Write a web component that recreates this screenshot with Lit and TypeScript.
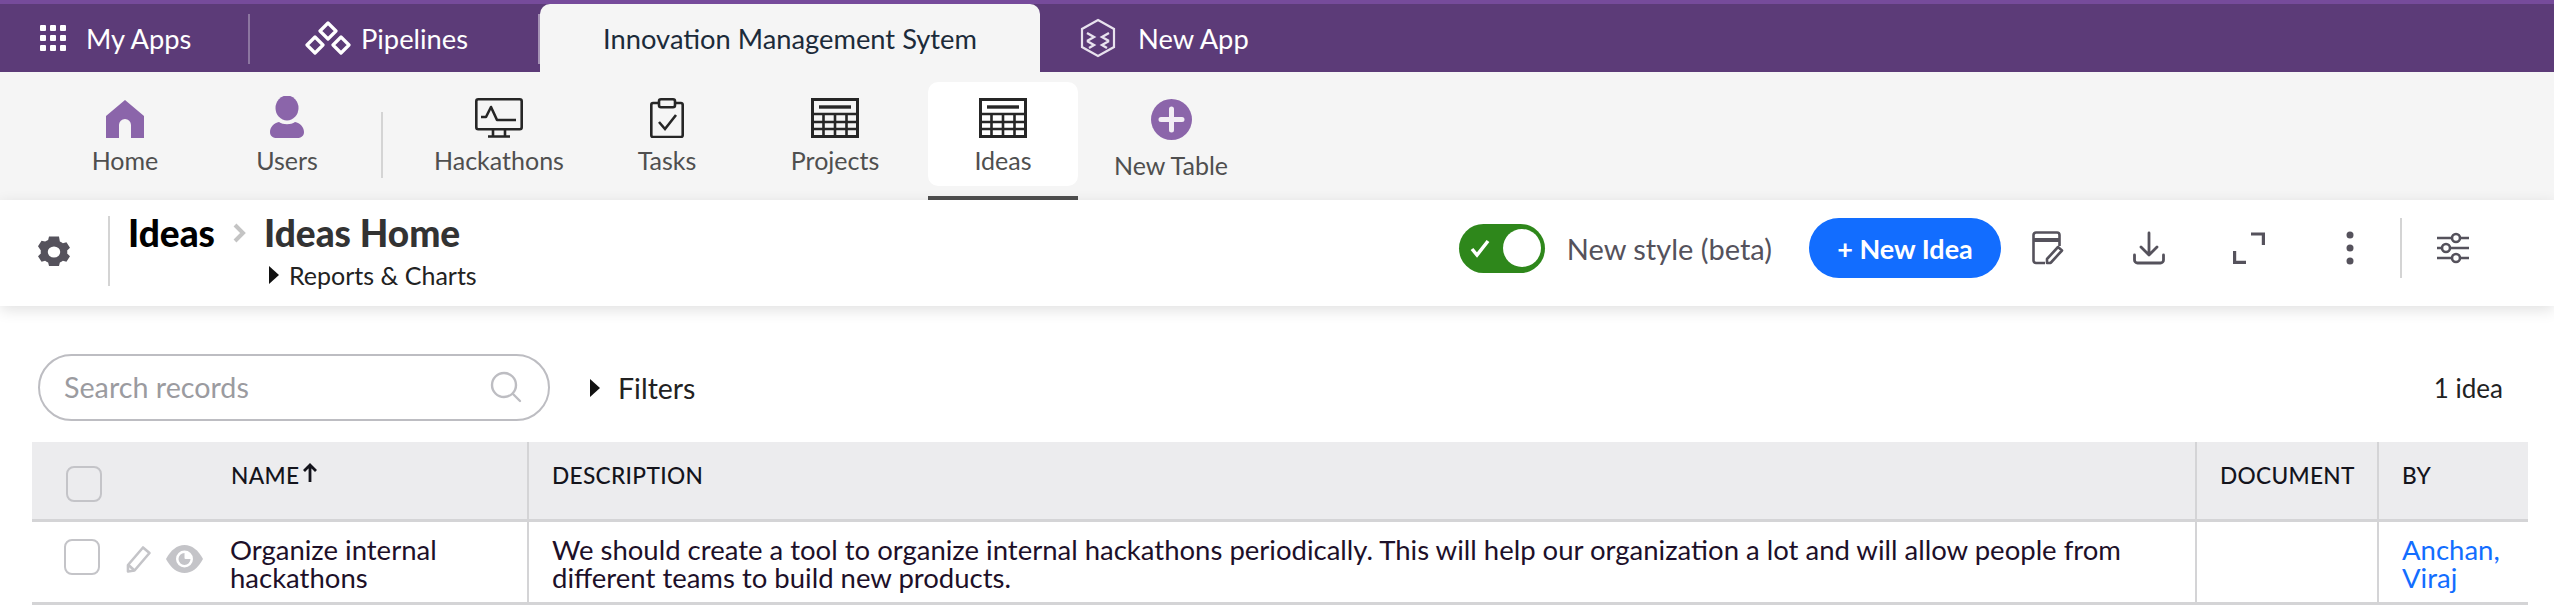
import { LitElement, css, html, svg } from "lit";
import { customElement } from "lit/decorators.js";

const gridIcon = html`<svg width="26" height="26" viewBox="0 0 26 26" fill="#fff">
  ${[0, 10, 20].map((y) => [0, 10, 20].map((x) => svg`<rect x=${x} y=${y} width="6" height="6" rx="1"></rect>`))}
</svg>`;

const pipelineIcon = html`<svg width="46" height="34" viewBox="0 0 46 34" fill="none" stroke="#fff" stroke-width="3.200" stroke-linejoin="round">
  <path d="M23 2l8 8-8 8-8-8z"></path>
  <path d="M10 16l8 8-8 8-8-8z"></path>
  <path d="M36 16l8 8-8 8-8-8z"></path>
</svg>`;

const hexIcon = html`<svg width="38" height="40" viewBox="0 0 38 40" fill="none" stroke="#e8e2ee" stroke-width="2.200">
  <path d="M19 2l16 9v18l-16 9-16-9V11z"></path>
  <path d="M8 15l7 4-7 4M8 23l7 4-5 3M30 15l-7 4 7 4M30 23l-7 4 5 3" stroke-width="2.400"></path>
</svg>`;

const homeIcon = html`<svg width="40" height="38" viewBox="0 0 40 38" fill="#8b65aa">
  <path d="M20 0l19 16v22H26V25a6 6 0 0 0-12 0v13H1V16z"></path>
</svg>`;

const userIcon = html`<svg width="34" height="42" viewBox="0 0 34 42" fill="#8b65aa">
  <ellipse cx="17" cy="12" rx="11.500" ry="12.500"></ellipse>
  <path d="M9 26c4 3 12 3 16 0 5 1 9 5 9 10 0 4-3 6-7 6H7c-4 0-7-2-7-6 0-5 4-9 9-10z"></path>
</svg>`;

const monitorIcon = html`<svg width="48" height="40" viewBox="0 0 48 40" fill="none" stroke="#262626" stroke-width="2.600">
  <rect x="1.300" y="1.300" width="45.400" height="30" rx="2"></rect>
  <path d="M6 19h5l5-10 6 13h19" stroke-linejoin="round"></path>
  <path d="M18 32v6M30 32v6M13 38.500h22"></path>
</svg>`;

const clipboardIcon = html`<svg width="34" height="40" viewBox="0 0 34 40" fill="none" stroke="#262626" stroke-width="2.600">
  <path d="M10 5H3a1.700 1.700 0 0 0-1.700 1.700v30.600A1.700 1.700 0 0 0 3 39h28a1.700 1.700 0 0 0 1.700-1.700V6.700A1.700 1.700 0 0 0 31 5h-7"></path>
  <rect x="9" y="1.300" width="16" height="8" rx="2"></rect>
  <path d="M9 24l6 7 11-14"></path>
</svg>`;

const tableIcon = html`<svg width="48" height="40" viewBox="0 0 48 40" fill="none" stroke="#262626">
  <rect x="1.500" y="1.500" width="45" height="37" stroke-width="3"></rect>
  <path d="M8 9h32" stroke-width="3.400"></path>
  <path d="M2 16h44M2 24h44M2 31h44" stroke-width="2.600"></path>
  <path d="M12.500 16v22M24 16v22M35.500 16v22" stroke-width="2.600"></path>
</svg>`;

const plusIcon = html`<svg width="41" height="41" viewBox="0 0 41 41">
  <circle cx="20.500" cy="20.500" r="20.500" fill="#8b65aa"></circle>
  <path d="M20.500 10v21M10 20.500h21" stroke="#f2eef5" stroke-width="5" stroke-linecap="round"></path>
</svg>`;

const gearIcon = html`<svg width="32" height="32" viewBox="3 2 18 20" preserveAspectRatio="none" fill="#55525c">
  <path fill-rule="evenodd" d="M19.400 13a7.600 7.600 0 0 0 0-2l1.600-1.600-2-3.500-2 .6a7.500 7.500 0 0 0-1.700-1L14.800 2.300H9.200l-.5 2.200a7.500 7.500 0 0 0-1.700 1l-2-.6-2 3.500L4.600 11a7.600 7.600 0 0 0 0 2L3 14.600l2 3.500 2-.6a7.500 7.500 0 0 0 1.700 1l.5 2.200h5.600l.5-2.200a7.500 7.500 0 0 0 1.700-1l2 .6 2-3.500zM12 15.500a3.500 3.500 0 1 1 0-7 3.500 3.500 0 0 1 0 7z"></path>
</svg>`;

const noteIcon = html`<svg width="34" height="34" viewBox="0 0 34 34" fill="none" stroke="#55525c" stroke-width="2.600" stroke-linejoin="round">
  <path d="M13 32H4a2.500 2.500 0 0 1-2.500-2.500V4A2.500 2.500 0 0 1 4 1.500h21A2.500 2.500 0 0 1 27.500 4v11"></path>
  <path d="M2 9h25" stroke-width="4"></path>
  <path d="M18 32h-3v-4l11-12 4 3.500-11 12z"></path>
</svg>`;

const downloadIcon = html`<svg width="32" height="34" viewBox="0 0 32 34" fill="none" stroke="#55525c" stroke-width="2.800" stroke-linecap="round" stroke-linejoin="round">
  <path d="M16 2v22M8 16l8 8 8-8"></path>
  <path d="M1.500 24v5a3 3 0 0 0 3 3h23a3 3 0 0 0 3-3v-5"></path>
</svg>`;

const expandIcon = html`<svg width="32" height="32" viewBox="0 0 32 32" fill="none" stroke="#55525c" stroke-width="3.200">
  <path d="M18 2h12.400v11M1.600 19v11.400H13"></path>
</svg>`;

const dotsIcon = html`<svg width="8" height="34" viewBox="0 0 8 34" fill="#55525c">
  <circle cx="4" cy="4" r="3.500"></circle>
  <circle cx="4" cy="17" r="3.500"></circle>
  <circle cx="4" cy="30" r="3.500"></circle>
</svg>`;

const slidersIcon = html`<svg width="32" height="34" viewBox="0 0 32 34" fill="none" stroke="#55525c" stroke-width="2.600">
  <path d="M0 7h15M23 7h9M0 17h5M13 17h19M0 27h15M23 27h9"></path>
  <circle cx="19" cy="7" r="4"></circle>
  <circle cx="9" cy="17" r="4"></circle>
  <circle cx="19" cy="27" r="4"></circle>
</svg>`;

const searchIcon = html`<svg width="32" height="32" viewBox="0 0 32 32" fill="none" stroke="#bdbdc2" stroke-width="2.400" stroke-linecap="round">
  <circle cx="14" cy="14" r="12"></circle>
  <path d="M23 23l7 7"></path>
</svg>`;

const pencilIcon = html`<svg width="26" height="28" viewBox="0 0 26 28" fill="none" stroke="#c4c4c8" stroke-width="2.600" stroke-linejoin="round">
  <path d="M2 20L17 2.500l6.500 5.500L8.500 25.500 2 26.500z"></path>
  <path d="M2.500 20l6 5.500"></path>
</svg>`;

const eyeIcon = html`<svg width="37" height="28" viewBox="0 0 37 28">
  <path fill="#c4c4c8" d="M0 14C5 5 11 0 18.500 0S32 5 37 14c-5 9-11 14-18.500 14S5 23 0 14z"></path>
  <circle cx="18.500" cy="14" r="8.500" fill="#fff"></circle>
  <path fill="#c4c4c8" d="M18.500 8a6 6 0 1 0 6 6h-5a1 1 0 0 1-1-1z"></path>
</svg>`;

const apps = [
  { label: "Home", icon: homeIcon },
  { label: "Users", icon: userIcon },
];

const tables = [
  { label: "Hackathons", icon: monitorIcon },
  { label: "Tasks", icon: clipboardIcon },
  { label: "Projects", icon: tableIcon },
  { label: "Ideas", icon: tableIcon, active: true },
];

@customElement("app-root")
export class AppRoot extends LitElement {
  static styles = css`
    :host {
      display: block;
      font-family: Lato, "Noto Sans", sans-serif;
      color: #1d1029;
      background: #fff;
      height: 608px;
      overflow: hidden;
    }

    .topbar {
      display: flex;
      height: 72px;
      box-sizing: border-box;
      background: #5c3b78;
      border-top: 4px solid #764b9b;
      color: #fff;
      font-size: 27.300px;
    }
    .topitem {
      display: flex;
      align-items: center;
    }
    .myapps {
      width: 248px;
      padding-left: 40px;
      gap: 20px;
      box-sizing: border-box;
    }
    .topsep {
      width: 2px;
      height: 50px;
      margin-top: 10px;
      background: #8c76a0;
    }
    .pipelines {
      width: 288px;
      padding-left: 55px;
      gap: 10px;
      box-sizing: border-box;
    }
    .tabsep {
      width: 2px;
      height: 50px;
      margin-top: 10px;
      background: #a593b5;
    }
    .tab {
      width: 500px;
      background: #f5f5f5;
      color: #1c2b3a;
      border-radius: 10px 10px 0 0;
      justify-content: center;
    }
    .newapp {
      padding-left: 39px;
      gap: 21px;
    }

    .subnav {
      display: flex;
      height: 128px;
      padding-left: 50px;
      background: #f5f5f5;
      box-sizing: border-box;
    }
    .group {
      display: flex;
    }
    .homes {
      gap: 12px;
    }
    .navsep {
      width: 2px;
      height: 66px;
      margin: 40px 41px 0 19px;
      background: #d4d4d4;
    }
    .tables {
      gap: 18px;
    }
    .navitem {
      display: flex;
      flex-direction: column;
      align-items: center;
      width: 150px;
      height: 104px;
      margin-top: 10px;
      box-sizing: border-box;
      color: #4f4f4f;
      font-size: 25px;
      position: relative;
    }
    .navicon {
      display: flex;
      align-items: flex-end;
      height: 56px;
      margin-bottom: 7px;
    }
    .navitem.active {
      background: #fff;
      border-radius: 10px;
    }
    .navitem.active::after {
      content: "";
      position: absolute;
      left: 0;
      right: 0;
      bottom: -14px;
      height: 4px;
      background: #4f4f4f;
    }
    .newtable {
      margin-left: 18px;
    }
    .newtable .navicon {
      height: 58px;
      margin-bottom: 10px;
    }

    .toolbar {
      display: flex;
      align-items: center;
      height: 106px;
      background: #fff;
      box-shadow: 0 4px 14px rgba(0, 0, 0, 0.12);
      position: relative;
    }
    .gear {
      display: flex;
      width: 70px;
      padding-left: 38px;
      margin-top: -2px;
      box-sizing: border-box;
    }
    .crumbsep {
      width: 2px;
      height: 70px;
      margin: -4px 0 0 38px;
      background: #d4d4d4;
    }
    .crumbs {
      display: grid;
      grid-template-columns: 104px 32px auto;
      grid-template-rows: 44px 40px;
      margin-left: 18px;
      font-size: 37px;
      font-weight: 900;
      line-height: 44px;
      color: #000;
    }
    .chev {
      align-self: center;
    }
    .ideas-home {
      color: #333;
    }
    .reports {
      grid-column: 3;
      display: flex;
      align-items: center;
      gap: 10px;
      font-size: 25px;
      font-weight: 400;
      color: #222;
      padding-left: 5px;
    }
    .tri {
      width: 0;
      height: 0;
      border-left: 10px solid #111;
      border-top: 9px solid transparent;
      border-bottom: 9px solid transparent;
    }
    .actions {
      display: flex;
      align-items: center;
      margin: 0 84px 10px auto;
    }
    .switch {
      display: flex;
      align-items: center;
      justify-content: space-between;
      width: 86px;
      height: 49px;
      padding: 0 4px 0 11px;
      box-sizing: border-box;
      background: #2e871b;
      border-radius: 25px;
    }
    .knob {
      width: 38px;
      height: 38px;
      background: #fff;
      border-radius: 50%;
    }
    .style-label {
      margin-left: 22px;
      font-size: 29px;
      color: #55525c;
    }
    .new-btn {
      display: flex;
      align-items: center;
      justify-content: center;
      width: 192px;
      height: 60px;
      margin-left: 37px;
      background: #126dff;
      color: #fff;
      border-radius: 30px;
      font-size: 27px;
      font-weight: 700;
    }
    .tool {
      display: flex;
      justify-content: center;
      width: 34px;
    }
    .note {
      margin-left: 31px;
    }
    .download {
      margin-left: 66px;
    }
    .expand {
      margin-left: 66px;
    }
    .dots {
      margin-left: 67px;
    }
    .toolsep {
      width: 2px;
      height: 60px;
      margin-left: 33px;
      background: #d4d4d4;
    }
    .sliders {
      margin-left: 34px;
    }

    .filters {
      display: flex;
      align-items: center;
      height: 67px;
      margin: 48px 51px 0 38px;
    }
    .search {
      display: flex;
      align-items: center;
      justify-content: space-between;
      width: 512px;
      height: 67px;
      padding: 0 26px 2px 24px;
      box-sizing: border-box;
      border: 2px solid #bdbdc2;
      border-radius: 34px;
      font-size: 28.700px;
      color: #9b9ba0;
    }
    .filter-toggle {
      display: flex;
      align-items: center;
      gap: 18px;
      margin-left: 40px;
      font-size: 28.500px;
      color: #222;
    }
    .count {
      margin-left: auto;
      font-size: 26px;
      color: #222;
    }

    .table {
      display: grid;
      grid-template-columns: 495px 1668px 182px 151px;
      width: 2496px;
      margin: 21px 0 0 32px;
      font-size: 27.500px;
      line-height: 28px;
    }
    .th {
      height: 80px;
      padding-top: 20px;
      box-sizing: border-box;
      background: #ececee;
      border-bottom: 3px solid #d4d4d6;
      border-left: 2px solid #d4d4d6;
      font-size: 22.700px;
      font-weight: 500;
      letter-spacing: 0.3px;
      color: #14141c;
      padding-left: 23px;
    }
    .td {
      height: 83px;
      padding: 14px 24px 0 23px;
      box-sizing: border-box;
      border-bottom: 3px solid #d4d4d6;
      border-left: 2px solid #d4d4d6;
    }
    .name-col {
      display: flex;
      border-left: none;
      padding-left: 0;
    }
    .check {
      flex-shrink: 0;
      width: 36px;
      height: 36px;
      box-sizing: border-box;
      background: #fff;
      border: 2px solid #c4c4c8;
      border-radius: 8px;
    }
    .th .check {
      margin: 4px 0 0 34px;
      background: transparent;
    }
    .td .check {
      margin: 3px 0 0 32px;
    }
    .th .name {
      margin-left: 129px;
      display: flex;
      gap: 4px;
    }
    .actions-cell {
      flex-shrink: 0;
      display: flex;
      align-items: flex-start;
      gap: 14px;
      width: 130px;
      padding: 9px 0 0 26px;
      box-sizing: border-box;
    }
    .link {
      color: #126dff;
    }
  `;

  private renderNavItem(item: { label: string; icon: unknown; active?: boolean }) {
    return html`<div class="navitem ${item.active ? "active" : ""}">
      <div class="navicon">${item.icon}</div>
      ${item.label}
    </div>`;
  }

  render() {
    return html`
      <div class="topbar">
        <div class="topitem myapps">${gridIcon} My Apps</div>
        <div class="topsep"></div>
        <div class="topitem pipelines">${pipelineIcon} Pipelines</div>
        <div class="tabsep"></div>
        <div class="topitem tab">Innovation Management Sytem</div>
        <div class="topitem newapp">${hexIcon} New App</div>
      </div>

      <div class="subnav">
        <div class="group homes">${apps.map((a) => this.renderNavItem(a))}</div>
        <div class="navsep"></div>
        <div class="group tables">${tables.map((t) => this.renderNavItem(t))}</div>
        <div class="navitem newtable">
          <div class="navicon">${plusIcon}</div>
          New Table
        </div>
      </div>

      <div class="toolbar">
        <div class="gear">${gearIcon}</div>
        <div class="crumbsep"></div>
        <div class="crumbs">
          <span>Ideas</span>
          <svg class="chev" width="14" height="22" viewBox="0 0 14 22" fill="none" stroke="#c4c4c4" stroke-width="4">
            <path d="M3 3l8 8-8 8"></path>
          </svg>
          <span class="ideas-home">Ideas Home</span>
          <div class="reports"><span class="tri"></span>Reports &amp; Charts</div>
        </div>
        <div class="actions">
          <div class="switch">
            <svg width="20" height="20" viewBox="0 0 20 20" fill="none" stroke="#fff" stroke-width="3.500">
              <path d="M2 11l5 6L18 3"></path>
            </svg>
            <span class="knob"></span>
          </div>
          <span class="style-label">New style (beta)</span>
          <div class="new-btn">+ New Idea</div>
          <div class="tool note">${noteIcon}</div>
          <div class="tool download">${downloadIcon}</div>
          <div class="tool expand">${expandIcon}</div>
          <div class="tool dots">${dotsIcon}</div>
          <div class="toolsep"></div>
          <div class="tool sliders">${slidersIcon}</div>
        </div>
      </div>

      <div class="filters">
        <div class="search">Search records ${searchIcon}</div>
        <div class="filter-toggle"><span class="tri"></span>Filters</div>
        <div class="count">1 idea</div>
      </div>

      <div class="table">
        <div class="th name-col">
          <span class="check"></span>
          <span class="name">NAME
            <svg width="14" height="22" viewBox="0 0 14 22" fill="none" stroke="#14141c" stroke-width="2.800">
              <path d="M7 20V3M1 9l6-6 6 6"></path>
            </svg>
          </span>
        </div>
        <div class="th">DESCRIPTION</div>
        <div class="th">DOCUMENT</div>
        <div class="th">BY</div>

        <div class="td name-col">
          <span class="check"></span>
          <div class="actions-cell">${pencilIcon}${eyeIcon}</div>
          <div>Organize internal hackathons</div>
        </div>
        <div class="td">We should create a tool to organize internal hackathons periodically. This will help our organization a lot and will allow people from different teams to build new products.</div>
        <div class="td"></div>
        <div class="td link">Anchan, Viraj</div>
      </div>
    `;
  }
}
